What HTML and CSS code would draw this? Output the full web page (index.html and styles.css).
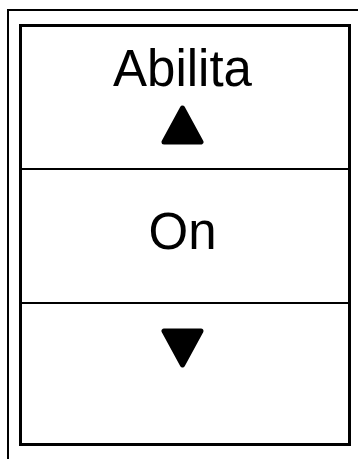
FILE: index.html
```html
<!DOCTYPE html>
<html>

<head>
  <meta charset="UTF-8">
  <title>Abilita</title>
  <link rel="stylesheet" href="styles.css">
</head>

<body>
  <div class="frame">
    <div class="menu">
      <div class="row row-title">
        <div class="label">Abilita</div>
        <svg class="arrow" width="43" height="40" viewBox="0 0 43 40">
          <polygon points="21.5,3 40,37 3,37" />
        </svg>
      </div>
      <div class="row row-value">
        <div class="label">On</div>
      </div>
      <div class="row row-down">
        <svg class="arrow" width="43" height="40" viewBox="0 0 43 40">
          <polygon points="3,3 40,3 21.5,37" />
        </svg>
      </div>
    </div>
  </div>
</body>

</html>
```

FILE: styles.css
```css
body {
  margin: 0;
  font-family: "Liberation Sans", Arial, sans-serif;
  background: #fff;
  color: #000;
  overflow: hidden;
}

.frame {
  box-sizing: border-box;
  margin: 9px 0 0 7px;
  padding: 13px 0 0 10px;
  width: 351px;
  height: 450px;
  border-top: 2px solid #000;
  border-left: 2px solid #000;
}

.menu {
  width: 326px;
  height: 416px;
  border: 3px solid #000;
  display: flex;
  flex-direction: column;
}

.row {
  display: flex;
  flex-direction: column;
  align-items: center;
  padding-right: 5px;
}

.row-title {
  height: 127px;
  padding-top: 14px;
}

.row-value {
  height: 98px;
  padding-top: 34px;
  border-top: 2px solid #000;
}

.row-down {
  flex: 1;
  padding-top: 24px;
  border-top: 2px solid #000;
}

.label {
  font-size: 51px;
  line-height: 56px;
}

.row-title .arrow {
  margin-top: 8px;
}

.arrow polygon {
  fill: #000;
  stroke: #000;
  stroke-width: 5;
  stroke-linejoin: round;
}
```
